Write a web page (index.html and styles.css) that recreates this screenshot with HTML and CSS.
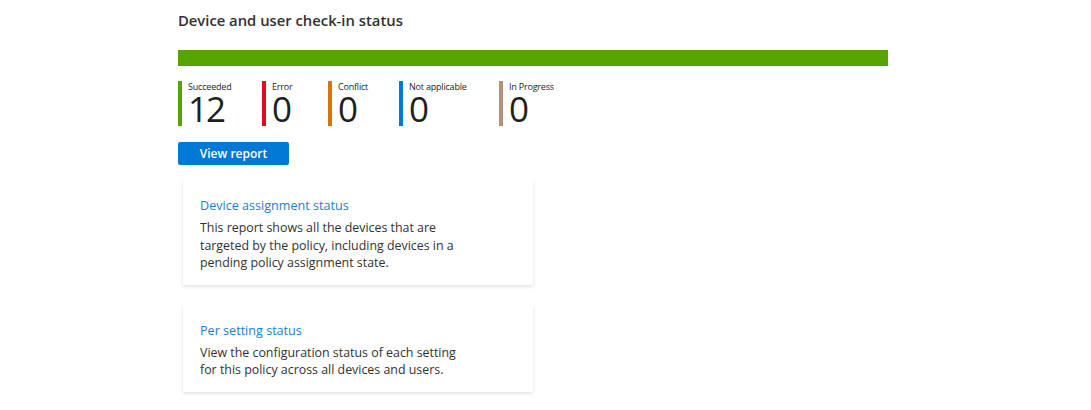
FILE: index.html
```html
<!DOCTYPE html>
<html>
<head>
<meta charset="utf-8">
<link rel="stylesheet" href="styles.css">
</head>
<body>
<main class="page">
  <h2 class="title">Device and user check-in status</h2>
  <div class="bar"><div class="bar-fill" style="width:100%"></div></div>
  <div class="stats">
    <div class="stat stat-success"><span class="stat-label">Succeeded</span><span class="stat-num">12</span></div>
    <div class="stat stat-error"><span class="stat-label">Error</span><span class="stat-num">0</span></div>
    <div class="stat stat-conflict"><span class="stat-label">Conflict</span><span class="stat-num">0</span></div>
    <div class="stat stat-na"><span class="stat-label">Not applicable</span><span class="stat-num">0</span></div>
    <div class="stat stat-progress"><span class="stat-label">In Progress</span><span class="stat-num">0</span></div>
  </div>
  <button class="btn">View report</button>
  <div class="cards">
    <div class="card">
      <a class="card-title">Device assignment status</a>
      <p class="card-text">This report shows all the devices that are targeted by the policy, including devices in a pending policy assignment state.</p>
    </div>
    <div class="card">
      <a class="card-title">Per setting status</a>
      <p class="card-text">View the configuration status of each setting for this policy across all devices and users.</p>
    </div>
  </div>
</main>
</body>
</html>
```

FILE: styles.css
```css
* { box-sizing: border-box; }
body {
  margin: 0;
  background: #fff;
  font-family: "Segoe UI", "Open Sans", "Noto Sans", sans-serif;
  color: #323130;
}
.page {
  padding: 10px 0 16px 178px;
  width: 888px;
}
.title {
  margin: 0;
  font-size: 14.8px;
  font-weight: 600;
  line-height: 20px;
  color: #323130;
}
.bar {
  margin-top: 20px;
  height: 16px;
  width: 710px;
  background: #e1dfdd;
}
.bar-fill {
  height: 100%;
  background: #57a300;
}
.stats {
  display: grid;
  grid-template-columns: 84px 66px 71px 100px auto;
  margin-top: 15px;
}
.stat {
  display: flex;
  flex-direction: column;
  border-left: 4px solid #57a300;
  padding-left: 6px;
  height: 45px;
}
.stat-error { border-color: #e00b1c; }
.stat-conflict { border-color: #db7500; }
.stat-na { border-color: #0078d4; }
.stat-progress { border-color: #b4917a; }
.stat-label {
  font-size: 9px;
  line-height: 11px;
  letter-spacing: -0.2px;
  color: #201f1e;
}
.stat-num {
  font-size: 35px;
  line-height: 34px;
  font-weight: 500;
  color: #201f1e;
  letter-spacing: -2px;
}
.btn {
  display: block;
  margin-top: 16px;
  width: 111px;
  height: 23px;
  border: none;
  border-radius: 2px;
  background: #0078d4;
  color: #fff;
  font-family: inherit;
  font-size: 12px;
  font-weight: 600;
  padding: 0;
}
.cards {
  display: flex;
  flex-direction: column;
  gap: 20px;
  margin-top: 15px;
  margin-left: 5px;
  width: 350px;
}
.card {
  background: #fff;
  box-shadow: 0 1.6px 3.6px rgba(0,0,0,0.13), 0 0.3px 0.9px rgba(0,0,0,0.11);
  padding: 17px 17px 13px 17px;
}
.card-title {
  display: block;
  font-size: 12.6px;
  font-weight: 500;
  line-height: 18px;
  color: #1a7dd3;
}
.card-text {
  margin: 4px 0 0 0;
  font-size: 12.4px;
  line-height: 17.5px;
  color: #323130;
  width: 262px;
}
```
